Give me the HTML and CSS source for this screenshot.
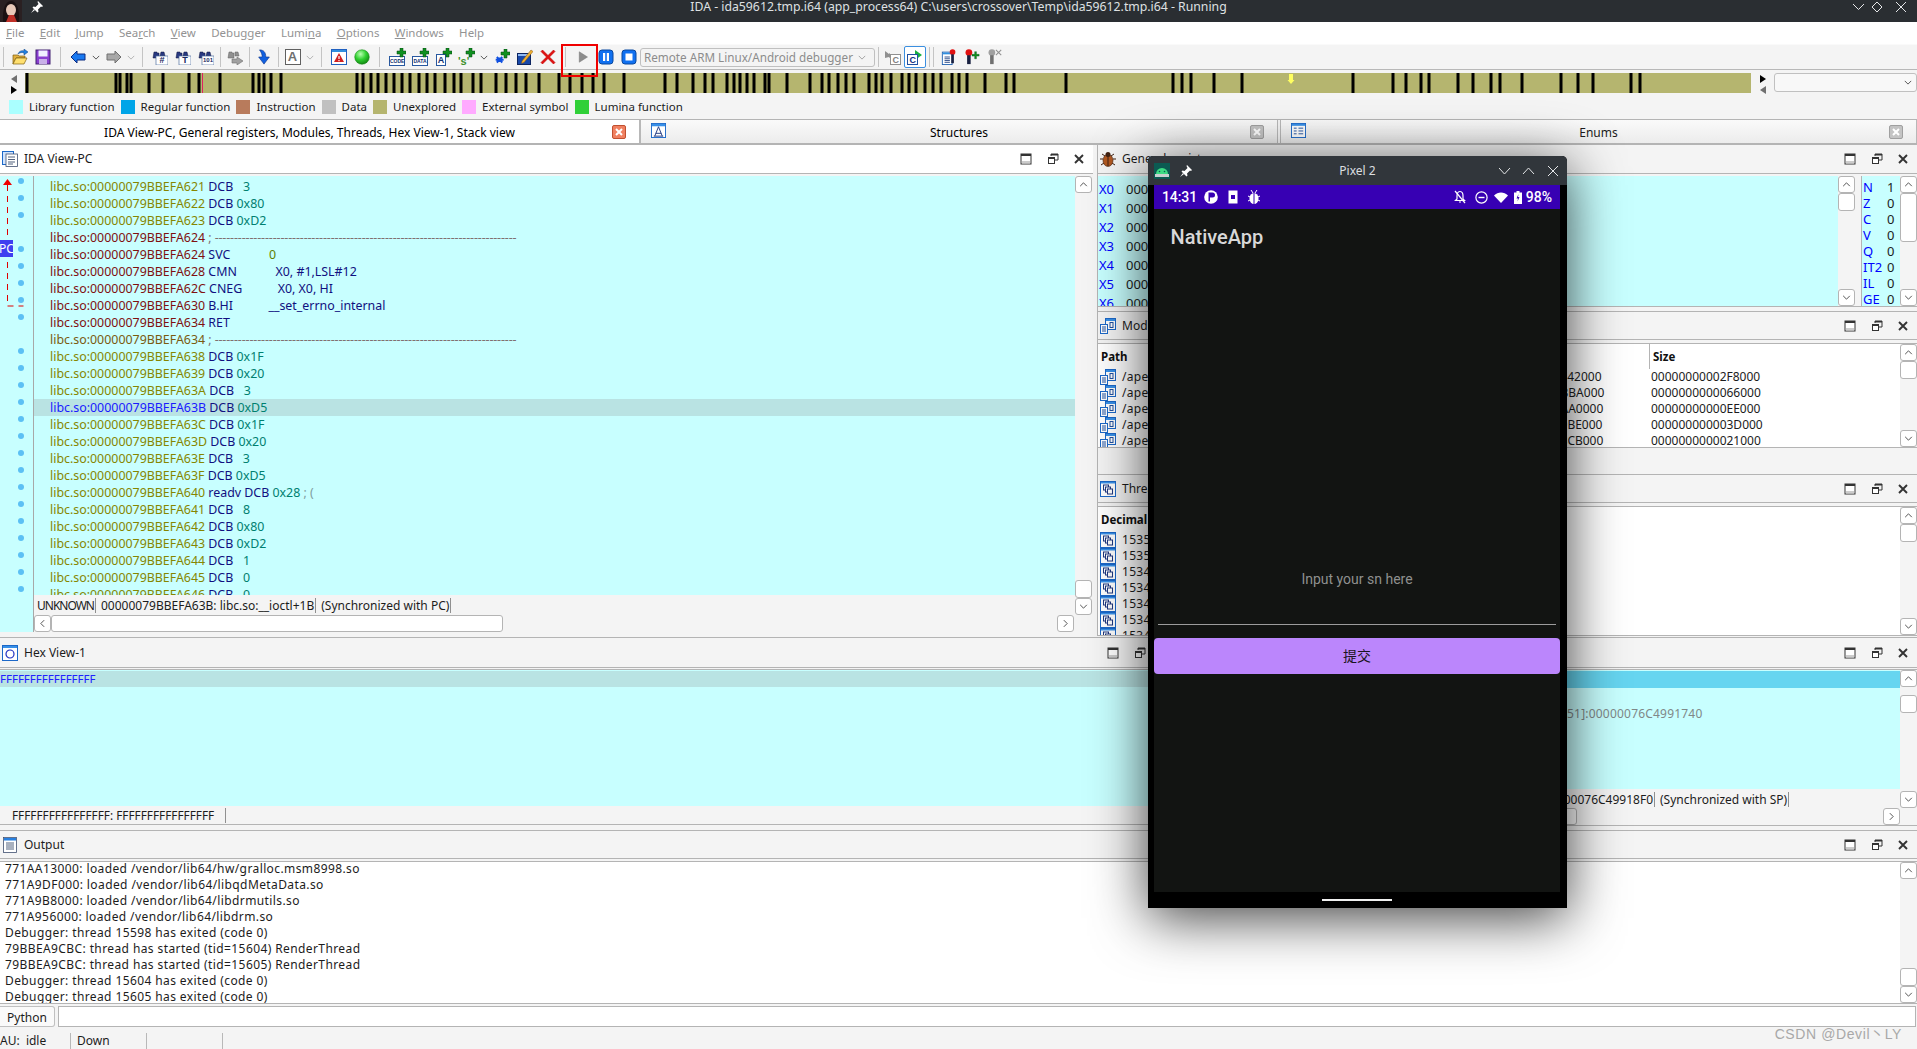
FILE: index.html
```html
<!DOCTYPE html>
<html lang="en">
<head>
  <meta charset="UTF-8" />
  <title>IDA - ida59612.tmp.i64</title>
  <link rel="stylesheet" href="styles.css">
</head>
<body>
  <!-- shared icons -->
  <svg class="sprite" xmlns="http://www.w3.org/2000/svg">
    <defs>
      <radialGradient id="ballFill" cx="40%" cy="30%" r="75%"><stop offset="0" stop-color="#b8ffb0"/><stop offset=".5" stop-color="#30d030"/><stop offset="1" stop-color="#108010"/></radialGradient>
      <symbol id="i-folder" viewBox="0 0 16 16"><path d="M1 15V6h5l1 1h6v2H4l-3 6z" fill="#e0b040" stroke="#806010" stroke-width=".7"/><path d="M1 15l3-6h11l-3 6z" fill="#ffe070" stroke="#806010" stroke-width=".7"/><path d="M6 5c1-3 4-4 6-3V0l4 3-4 3V4c-2-1-4-.5-6 1z" fill="#2080e0" stroke="#104080" stroke-width=".5"/></symbol>
      <symbol id="i-save" viewBox="0 0 16 16"><rect x="1" y="1" width="14" height="14" fill="#8a3fd0" stroke="#402070"/><rect x="3.500" y="1.500" width="9" height="6" fill="#f0f0ff"/><rect x="4" y="10" width="8" height="5" fill="#c8b0e8"/></symbol>
      <symbol id="i-back" viewBox="0 0 16 16"><path d="M1 8l6-6v3h8v6H7v3z" fill="#1878f0" stroke="#0a2a80"/></symbol>
      <symbol id="i-fwd" viewBox="0 0 16 16"><path d="M15 8L9 2v3H1v6h8v3z" fill="#a8a8a8" stroke="#707070"/></symbol>
      <symbol id="i-binoc" viewBox="0 0 16 16"><path d="M1 9l1-6h3v1h2v5z" fill="#283880" stroke="#101840" stroke-width=".5"/><path d="M9 3h3l1 4H8z" fill="#283880" stroke="#101840" stroke-width=".5"/><rect x="4" y="7" width="12" height="9" fill="#fff" stroke="#5070a0" stroke-width=".7"/></symbol>
      <symbol id="i-binarrow" viewBox="0 0 16 16"><path d="M1 9l1-6h3v1h2v5z" fill="#909090" stroke="#606060" stroke-width=".5"/><path d="M8 3h3l1 4H8z" fill="#909090" stroke="#606060" stroke-width=".5"/><path d="M5 10h5V8l6 4-6 4v-2H5z" fill="#a0a0a0" stroke="#707070" stroke-width=".6"/></symbol>
      <symbol id="i-down" viewBox="0 0 16 18"><path d="M3 1c5 0 7 3 7 8h4l-6 8-6-8h4c0-3-1-5-3-8z" fill="#1060e0" stroke="#08308a" stroke-width=".7"/></symbol>
      <symbol id="i-warn" viewBox="0 0 16 16"><rect x=".5" y=".5" width="15" height="15" fill="#fff" stroke="#2060c0"/><rect x="1" y="1" width="14" height="2" fill="#3090e0"/><path d="M8 4l5 9H3z" fill="#d02020"/><rect x="7.400" y="7" width="1.200" height="3" fill="#fff"/><rect x="7.400" y="11" width="1.200" height="1.200" fill="#fff"/></symbol>
      <symbol id="i-ball" viewBox="0 0 16 16"><circle cx="8" cy="8" r="7.300" fill="url(#ballFill)" stroke="#108010" stroke-width=".5"/></symbol>
      <symbol id="i-plus" viewBox="0 0 16 16"><path d="M10 0h3v3h3v3h-3v3h-3V6H7V3h3z" fill="#109020" stroke="#064010" stroke-width=".5"/></symbol>
      <symbol id="i-star" viewBox="0 0 16 16"><path d="M5.600 5v4M2 7h7.200M3 4.500l5 5M8 4.500l-5 5" transform="translate(-.5 3) scale(1.100)" stroke="#1050e0" stroke-width="1.800" fill="none"/><path d="M10 0h3v3h3v3h-3v3h-3V6H7V3h3z" fill="#109020" stroke="#064010" stroke-width=".5"/></symbol>
      <symbol id="i-pencil" viewBox="0 0 16 16"><rect x=".5" y="4.500" width="13" height="11" fill="#1848a8" stroke="#0c2460"/><rect x="1" y="5" width="12" height="2" fill="#90b8f0"/><path d="M5 12l9-11 2 1.500-9 11-2.500 1z" fill="#f0b030" stroke="#805010" stroke-width=".5"/></symbol>
      <symbol id="i-cross" viewBox="0 0 16 16"><path d="M1 2.500L2.500 1 8 6.500 13.500 1 15 2.500 9.500 8l5.500 5.500-1.500 1.500L8 9.500 2.500 15 1 13.500 6.500 8z" fill="#e01010" stroke="#c00000" stroke-width=".6"/></symbol>
      <symbol id="i-play" viewBox="0 0 16 16"><path d="M3 1l11 7-11 7z" fill="#8c8c8c" stroke="#707070" stroke-width=".6"/></symbol>
      <symbol id="i-pause" viewBox="0 0 16 16"><rect x="1" y="1" width="14" height="14" rx="3" fill="#1070f0" stroke="#0848a0"/><rect x="5" y="4" width="2.200" height="8" fill="#fff"/><rect x="8.800" y="4" width="2.200" height="8" fill="#fff"/></symbol>
      <symbol id="i-stop" viewBox="0 0 16 16"><rect x="1" y="1" width="14" height="14" rx="3" fill="#1070f0" stroke="#0848a0"/><rect x="4.500" y="4.500" width="7" height="7" fill="#fff"/></symbol>
      <symbol id="i-cgray" viewBox="0 0 16 16"><path d="M0 2l4 3V4l3 2.500L4 9V8L0 9z" fill="#909090"/><rect x="5.500" y="5.500" width="10" height="10" fill="#fff" stroke="#909090"/><text x="7.500" y="14" font-family="Liberation Sans" font-size="9" font-weight="700" fill="#808080">C</text></symbol>
      <symbol id="i-cgreen" viewBox="0 0 16 16"><path d="M8 1l7 5-7 5z" fill="#18b040"/><rect x=".5" y="5.500" width="10" height="10" fill="#fff" stroke="#2050a0"/><text x="2.500" y="14" font-family="Liberation Sans" font-size="9" font-weight="700" fill="#103080">C</text></symbol>
      <symbol id="i-bplist" viewBox="0 0 16 18"><rect x=".5" y="3.500" width="11" height="14" fill="#fff" stroke="#2060b0"/><rect x="1" y="4" width="10" height="2" fill="#3090e0"/><path d="M3 9h6M3 11h6M3 13h6M3 15h6" stroke="#204080"/><circle cx="12" cy="3.500" r="3.200" fill="#e01010"/><rect x="10.500" y="6" width="3" height="10" fill="#182040"/></symbol>
      <symbol id="i-bpplus" viewBox="0 0 16 18"><circle cx="4.500" cy="4" r="3.800" fill="#e01010"/><rect x="2.500" y="7" width="4" height="10" fill="#182040"/><path d="M11 3h2v3h3v2h-3v3h-2V8H8V6h3z" fill="#109020" stroke="#064010" stroke-width=".4"/></symbol>
      <symbol id="i-bpx" viewBox="0 0 16 18"><circle cx="4.500" cy="4" r="3.800" fill="#a0a0a0"/><rect x="2.500" y="7" width="4" height="10" fill="#707070"/><path d="M9 1l6 6M15 1L9 7" stroke="#909090" stroke-width="1.200"/></symbol>
      <symbol id="i-list" viewBox="0 0 16 16"><rect x=".5" y=".5" width="11" height="13" fill="#d0e4ff" stroke="#1c68c8"/><rect x="4" y="3" width="11.500" height="12.500" fill="#fff" stroke="#405070" stroke-width=".8"/><path d="M6 6h7M6 8.500h7M6 11h7M6 13h5" stroke="#405070" stroke-width=".9"/></symbol>
      <symbol id="i-hex" viewBox="0 0 16 16"><rect x=".5" y=".5" width="15" height="15" fill="#fff" stroke="#1c68c8"/><rect x="1" y="1" width="14" height="2" fill="#3890e8"/><circle cx="8" cy="9" r="4" fill="none" stroke="#2030c0" stroke-width="1.200"/></symbol>
      <symbol id="i-output" viewBox="0 0 16 16"><rect x="1.500" y=".5" width="13" height="15" fill="#fff" stroke="#405070" stroke-width=".8"/><rect x="2" y="1" width="12" height="2.500" fill="#2880e0"/><path d="M4 6h8M4 8h8M4 10h8M4 12h8" stroke="#405070" stroke-width=".9"/></symbol>
      <symbol id="i-bug" viewBox="0 0 16 16"><path d="M2 3l3 2M14 3l-3 2M0 8h3M16 8h-3M1 14l3-2M15 14l-3-2" stroke="#402010"/><ellipse cx="8" cy="9.500" rx="5" ry="6" fill="#b05820" stroke="#402010" stroke-width=".6"/><circle cx="8" cy="3.500" r="2.500" fill="#402010"/><path d="M8 4v11" stroke="#402010"/></symbol>
      <symbol id="i-module" viewBox="0 0 16 16"><rect x="5.500" y=".5" width="10" height="11" fill="#fff" stroke="#1c68c8"/><rect x="6" y="1" width="9" height="2" fill="#3890e8"/><rect x="10" y="4.500" width="3" height="5" fill="none" stroke="#2050a0"/><rect x=".5" y="6.500" width="7" height="9" fill="#fff" stroke="#1c68c8"/><path d="M2 9h4M2 11h4M2 13h4" stroke="#2050a0"/></symbol>
      <symbol id="i-thread" viewBox="0 0 16 16"><rect x=".5" y=".5" width="15" height="15" fill="#fff" stroke="#1c68c8"/><rect x="1" y="1" width="14" height="1.500" fill="#3890e8"/><rect x="3.500" y="4" width="5" height="5" fill="none" stroke="#203880"/><rect x="5.500" y="6" width="5" height="5" fill="#fff" stroke="#203880"/><rect x="7.500" y="8" width="5" height="5" fill="#fff" stroke="#203880"/></symbol>
      <symbol id="i-struct" viewBox="0 0 16 16"><rect x=".5" y=".5" width="15" height="15" fill="#fff" stroke="#1c68c8"/><rect x="1" y="1" width="14" height="2.500" fill="#3890e8"/><path d="M8 4L4 14M8 4l4 10M5 11h6M3 14h10" stroke="#203880" fill="none"/></symbol>
      <symbol id="i-enum" viewBox="0 0 16 16"><rect x=".5" y=".5" width="15" height="15" fill="#fff" stroke="#1c68c8"/><rect x="1" y="1" width="14" height="2" fill="#3890e8"/><path d="M3 5.500h3M3 8.500h3M3 11.500h3M8 5.500h5M8 8.500h5M8 11.500h5" stroke="#2050a0"/></symbol>
      <symbol id="i-pin" viewBox="0 0 12 12"><path d="M7 0l5 5-1 1-1-.5-3 3 .5 2-1 1-5-5 1-1 2 .5 3-3L6.500 1z" fill="#fff"/><path d="M3 8l-3 4 4-3z" fill="#fff"/></symbol>
      <symbol id="i-max" viewBox="0 0 12 12"><rect x="1" y="1" width="10" height="10" fill="#fff" stroke="#333"/><rect x="1" y="1" width="10" height="2" fill="#333"/><rect x="2" y="8" width="8" height="2.500" fill="#ccc"/></symbol>
      <symbol id="i-restore" viewBox="0 0 12 12"><path d="M4 3V1h7v6H8" fill="none" stroke="#333"/><rect x="4" y="1" width="7" height="1.500" fill="#333"/><rect x="1.500" y="4.500" width="6" height="6" fill="#fff" stroke="#333"/><rect x="1.500" y="4.500" width="6" height="1.500" fill="#333"/></symbol>
      <symbol id="i-close" viewBox="0 0 12 12"><path d="M2 2l8 8M10 2l-8 8" stroke="#333" stroke-width="1.900"/></symbol>
      <symbol id="i-up" viewBox="0 0 10 6"><path d="M1 5l4-4 4 4" fill="none" stroke="#333"/></symbol>
      <symbol id="i-dn" viewBox="0 0 10 6"><path d="M1 1l4 4 4-4" fill="none" stroke="#333"/></symbol>
      <symbol id="i-lf" viewBox="0 0 6 10"><path d="M5 1L1 5l4 4" fill="none" stroke="#333"/></symbol>
      <symbol id="i-rt" viewBox="0 0 6 10"><path d="M1 1l4 4-4 4" fill="none" stroke="#333"/></symbol>
      <symbol id="i-tabx" viewBox="0 0 14 14"><rect x=".5" y=".5" width="13" height="13" rx="1.500" fill="#f08060" stroke="#c05030"/><path d="M4 4l6 6M10 4l-6 6" stroke="#fff" stroke-width="2"/></symbol>
      <symbol id="i-tabx2" viewBox="0 0 14 14"><rect x=".5" y=".5" width="13" height="13" rx="1.500" fill="#c4c4c4" stroke="#a0a0a0"/><path d="M4 4l6 6M10 4l-6 6" stroke="#fff" stroke-width="2"/></symbol>
    </defs>
  </svg>

  <header class="titlebar">
    <svg class="avatar" viewBox="0 0 22 22"><rect width="22" height="22" fill="#2a2022"/><path d="M3 22C2 8 6 1 11 1s9 7 8 21z" fill="#1a1012"/><ellipse cx="11" cy="10" rx="5" ry="6" fill="#e8c8b8"/><path d="M6 22l3-7h5l3 7z" fill="#c03028"/></svg>
    <svg class="title-pin"><use href="#i-pin"/></svg>
    <span class="title-text">IDA - ida59612.tmp.i64 (app_process64) C:\users\crossover\Temp\ida59612.tmp.i64 - Running</span>
    <svg class="win-btns" viewBox="0 0 60 12"><path d="M0 3l5.500 5.500L11 3" fill="none" stroke="#e4e6e8"/><path d="M24 1l5 5-5 5-5-5z" fill="none" stroke="#e4e6e8"/><path d="M43 1l10 10M53 1L43 11" fill="none" stroke="#e4e6e8"/></svg>
  </header>

  <nav class="menubar">
    <span><u>F</u>ile</span>
    <span><u>E</u>dit</span>
    <span><u>J</u>ump</span>
    <span>Sea<u>r</u>ch</span>
    <span><u>V</u>iew</span>
    <span>Debu<u>g</u>ger</span>
    <span>Lumi<u>n</u>a</span>
    <span><u>O</u>ptions</span>
    <span><u>W</u>indows</span>
    <span>Help</span>
  </nav>

  <div class="toolbar">
    <i class="sep sep-first"></i>
    <span class="tool"><svg><use href="#i-folder"/></svg></span>
    <span class="tool"><svg><use href="#i-save"/></svg></span>
    <i class="sep"></i>
    <span class="tool"><svg><use href="#i-back"/></svg></span>
    <span class="dd on"><svg><use href="#i-dn"/></svg></span>
    <span class="tool"><svg><use href="#i-fwd"/></svg></span>
    <span class="dd off"><svg><use href="#i-dn"/></svg></span>
    <i class="sep"></i>
    <span class="tool bin"><svg><use href="#i-binoc"/></svg><b>#</b></span>
    <span class="tool bin"><svg><use href="#i-binoc"/></svg><b>T</b></span>
    <span class="tool bin"><svg><use href="#i-binoc"/></svg><b class="tiny">101</b></span>
    <i class="sep tight"></i>
    <span class="tool"><svg><use href="#i-binarrow"/></svg></span>
    <i class="sep tight"></i>
    <span class="tool"><svg><use href="#i-down"/></svg></span>
    <i class="sep tight"></i>
    <span class="tool"><span class="a-box">A</span></span>
    <span class="dd off"><svg><use href="#i-dn"/></svg></span>
    <i class="sep"></i>
    <span class="tool"><svg><use href="#i-warn"/></svg></span>
    <span class="tool"><svg><use href="#i-ball"/></svg></span>
    <i class="sep"></i>
    <span class="tool add"><b class="box">CODE</b><svg><use href="#i-plus"/></svg></span>
    <span class="tool add"><b class="box">DATA</b><svg><use href="#i-plus"/></svg></span>
    <span class="tool add"><b class="box big">A</b><svg><use href="#i-plus"/></svg></span>
    <span class="tool add"><b class="str">'s'</b><svg><use href="#i-plus"/></svg></span>
    <span class="dd on"><svg><use href="#i-dn"/></svg></span>
    <span class="tool"><svg><use href="#i-star"/></svg></span>
    <span class="tool"><svg><use href="#i-pencil"/></svg></span>
    <span class="tool"><svg><use href="#i-cross"/></svg></span>
    <i class="sep"></i>
    <span class="tool marked"><svg class="play"><use href="#i-play"/></svg></span>
    <span class="tool"><svg><use href="#i-pause"/></svg></span>
    <span class="tool"><svg><use href="#i-stop"/></svg></span>
    <div class="debugger-select"><span>Remote ARM Linux/Android debugger</span><svg><use href="#i-dn"/></svg></div>
    <i class="sep tight"></i>
    <span class="tool"><svg><use href="#i-cgray"/></svg></span>
    <span class="tool pressed"><svg><use href="#i-cgreen"/></svg></span>
    <i class="sep tight"></i>
    <i class="sep close"></i>
    <span class="tool"><svg><use href="#i-bplist"/></svg></span>
    <span class="tool"><svg><use href="#i-bpplus"/></svg></span>
    <span class="tool"><svg><use href="#i-bpx"/></svg></span>
  </div>

  <div class="navrow">
    <div class="nav-arrows"><i class="tri-l gray"></i><i class="tri-r"></i></div>
    <svg class="navband" viewBox="0 0 1726 20" preserveAspectRatio="none">
      <rect width="1726" height="20" fill="#b5b56f"/>
      <path stroke="#000" stroke-width="3" d="M2 0v20M91 0v20M95 0v20M102 0v20M106 0v20M124 0v20M138 0v20M164 0v20M174 0v20M195 0v20M228 0v20M234 0v20M239 0v20M246 0v20M256 0v20M332 0v20M338 0v20M346 0v20M353 0v20M361 0v20M369 0v20M377 0v20M385 0v20M394 0v20M402 0v20M410 0v20M420 0v20M429 0v20M436 0v20M448 0v20M456 0v20M471 0v20M481 0v20M491 0v20M501 0v20M514 0v20M534 0v20M545 0v20M557 0v20M568 0v20M579 0v20M599 0v20M640 0v20M652 0v20M668 0v20M680 0v20M688 0v20M702 0v20M709 0v20M715 0v20M722 0v20M729 0v20M740 0v20M744 0v20M762 0v20M785 0v20M797 0v20M804 0v20M813 0v20M821 0v20M829 0v20M844 0v20M851 0v20M857 0v20M866 0v20M877 0v20M884 0v20M891 0v20M900 0v20M908 0v20M916 0v20M927 0v20M934 0v20M942 0v20M960 0v20M981 0v20M989 0v20M1041 0v20M1148 0v20M1157 0v20M1166 0v20M1189 0v20M1217 0v20M1328 0v20M1368 0v20M1381 0v20M1396 0v20M1404 0v20M1433 0v20M1448 0v20M1466 0v20M1475 0v20M1497 0v20M1536 0v20M1553 0v20M1568 0v20M1606 0v20M1615 0v20"/>
      <path stroke="#e02060" d="M177.500 0v20"/>
      <path fill="#ffff60" d="M1264 1h4v6h1.500l-3.500 4-3.500-4h1.500z"/>
    </svg>
    <div class="nav-arrows right"><i class="tri-r"></i><i class="tri-l gray"></i></div>
    <div class="nav-select"><svg><use href="#i-dn"/></svg></div>
  </div>

  <div class="legend">
    <span class="lg lg-lib">Library function</span>
    <span class="lg lg-reg">Regular function</span>
    <span class="lg lg-ins">Instruction</span>
    <span class="lg lg-dat">Data</span>
    <span class="lg lg-une">Unexplored</span>
    <span class="lg lg-ext">External symbol</span>
    <span class="lg lg-lum">Lumina function</span>
  </div>

  <div class="tabs">
    <div class="tab tab-active">
      <span class="tab-name">IDA View-PC, General registers, Modules, Threads, Hex View-1, Stack view</span>
      <svg class="tab-x"><use href="#i-tabx"/></svg>
    </div>
    <div class="tab tab-struct">
      <svg class="tab-ic"><use href="#i-struct"/></svg>
      <span class="tab-name">Structures</span>
      <svg class="tab-x"><use href="#i-tabx2"/></svg>
    </div>
    <div class="tab tab-enum">
      <svg class="tab-ic"><use href="#i-enum"/></svg>
      <span class="tab-name">Enums</span>
      <svg class="tab-x"><use href="#i-tabx2"/></svg>
    </div>
  </div>

  <main class="workspace">
    <section class="upper">
      <!-- disassembly -->
      <div class="panel ida">
        <div class="ptitle active">
          <svg class="pic"><use href="#i-list"/></svg><span>IDA View-PC</span>
          <div class="ctl"><svg><use href="#i-max"/></svg><svg><use href="#i-restore"/></svg><svg><use href="#i-close"/></svg></div>
        </div>
        <div class="ida-body">
          <div class="gutter">
            <i class="d"></i><i class="d"></i><i class="d"></i><i></i><i class="d"></i><i class="d"></i><i class="d"></i><i class="d"></i><i class="d"></i><i></i><i class="d"></i><i class="d"></i><i class="d"></i><i class="d"></i><i class="d"></i><i class="d"></i><i class="d"></i><i class="d"></i><i class="d"></i><i class="d"></i><i class="d"></i><i class="d"></i><i class="d"></i><i class="d"></i><i class="d"></i>
            <svg class="jump" viewBox="0 0 24 170"><path d="M7.500 3L3 9h9z" fill="#f00000"/><path d="M7.500 9v121h16" fill="none" stroke="#e00000" stroke-dasharray="6 5"/></svg>
            <span class="pc-mark">PC</span>
          </div>
          <div class="ida-main">
            <div class="ida-left">
              <div class="code">
                <div class="ln"><span class="ad">libc.so:00000079BBEFA621</span> <span class="mn">DCB</span>   <span class="nm">3</span></div>
                <div class="ln"><span class="ad">libc.so:00000079BBEFA622</span> <span class="mn">DCB</span> <span class="nm">0x80</span></div>
                <div class="ln"><span class="ad">libc.so:00000079BBEFA623</span> <span class="mn">DCB</span> <span class="nm">0xD2</span></div>
                <div class="ln"><span class="ad cd">libc.so:00000079BBEFA624</span> <span class="cm">; ------------------------------------------------------------------------------</span></div>
                <div class="ln"><span class="ad cd">libc.so:00000079BBEFA624</span> <span class="mn">SVC</span>            <span class="zero">0</span></div>
                <div class="ln"><span class="ad cd">libc.so:00000079BBEFA628</span> <span class="mn">CMN</span>            <span class="mn">X0, #1,LSL#12</span></div>
                <div class="ln"><span class="ad cd">libc.so:00000079BBEFA62C</span> <span class="mn">CNEG</span>           <span class="mn">X0, X0, HI</span></div>
                <div class="ln"><span class="ad cd">libc.so:00000079BBEFA630</span> <span class="mn">B.HI</span>           <span class="mn">__set_errno_internal</span></div>
                <div class="ln"><span class="ad cd">libc.so:00000079BBEFA634</span> <span class="mn">RET</span></div>
                <div class="ln"><span class="ad cd2">libc.so:00000079BBEFA634</span> <span class="cm">; ------------------------------------------------------------------------------</span></div>
                <div class="ln"><span class="ad">libc.so:00000079BBEFA638</span> <span class="mn">DCB</span> <span class="nm">0x1F</span></div>
                <div class="ln"><span class="ad">libc.so:00000079BBEFA639</span> <span class="mn">DCB</span> <span class="nm">0x20</span></div>
                <div class="ln"><span class="ad">libc.so:00000079BBEFA63A</span> <span class="mn">DCB</span>   <span class="nm">3</span></div>
                <div class="ln sel"><span class="ad">libc.so:00000079BBEFA63B</span> <span class="mn">DCB</span> <span class="nm">0xD5</span></div>
                <div class="ln"><span class="ad">libc.so:00000079BBEFA63C</span> <span class="mn">DCB</span> <span class="nm">0x1F</span></div>
                <div class="ln"><span class="ad">libc.so:00000079BBEFA63D</span> <span class="mn">DCB</span> <span class="nm">0x20</span></div>
                <div class="ln"><span class="ad">libc.so:00000079BBEFA63E</span> <span class="mn">DCB</span>   <span class="nm">3</span></div>
                <div class="ln"><span class="ad">libc.so:00000079BBEFA63F</span> <span class="mn">DCB</span> <span class="nm">0xD5</span></div>
                <div class="ln"><span class="ad">libc.so:00000079BBEFA640</span> <span class="mn">readv DCB</span> <span class="nm">0x28</span> <span class="gr">; (</span></div>
                <div class="ln"><span class="ad">libc.so:00000079BBEFA641</span> <span class="mn">DCB</span>   <span class="nm">8</span></div>
                <div class="ln"><span class="ad">libc.so:00000079BBEFA642</span> <span class="mn">DCB</span> <span class="nm">0x80</span></div>
                <div class="ln"><span class="ad">libc.so:00000079BBEFA643</span> <span class="mn">DCB</span> <span class="nm">0xD2</span></div>
                <div class="ln"><span class="ad">libc.so:00000079BBEFA644</span> <span class="mn">DCB</span>   <span class="nm">1</span></div>
                <div class="ln"><span class="ad">libc.so:00000079BBEFA645</span> <span class="mn">DCB</span>   <span class="nm">0</span></div>
                <div class="ln"><span class="ad">libc.so:00000079BBEFA646</span> <span class="mn">DCB</span>   <span class="nm">0</span></div>
              </div>
              <div class="ida-status"><span class="cell cell-kind">UNKNOWN</span><span class="cell">00000079BBEFA63B: libc.so:__ioctl+1B</span><span class="cell">(Synchronized with PC)</span></div>
            </div>
            <div class="sb">
              <span class="sbb"><svg><use href="#i-up"/></svg></span>
              <span class="grow"></span>
              <span class="thumb t18"></span>
              <span class="sbb"><svg><use href="#i-dn"/></svg></span>
            </div>
            <div class="hs">
              <span class="sbb"><svg class="v"><use href="#i-lf"/></svg></span>
              <span class="hthumb"></span>
              <span class="grow"></span>
              <span class="sbb"><svg class="v"><use href="#i-rt"/></svg></span>
            </div>
          </div>
        </div>
      </div>

      <div class="rightcol">
        <!-- registers -->
        <div class="panel regs">
          <div class="ptitle">
            <svg class="pic"><use href="#i-bug"/></svg><span>General registers</span>
            <div class="ctl"><svg><use href="#i-max"/></svg><svg><use href="#i-restore"/></svg><svg><use href="#i-close"/></svg></div>
          </div>
          <div class="regs-body">
            <div class="reg-list">
              <div class="reg"><b>X0</b><span>0000000000000000</span></div>
              <div class="reg"><b>X1</b><span>0000000000000000</span></div>
              <div class="reg"><b>X2</b><span>0000000000000000</span></div>
              <div class="reg"><b>X3</b><span>0000000000000000</span></div>
              <div class="reg"><b>X4</b><span>0000000000000000</span></div>
              <div class="reg"><b>X5</b><span>0000000000000000</span></div>
              <div class="reg"><b>X6</b><span>0000000000000000</span></div>
            </div>
            <div class="sb">
              <span class="sbb"><svg><use href="#i-up"/></svg></span>
              <span class="thumb t18"></span>
              <span class="grow"></span>
              <span class="sbb"><svg><use href="#i-dn"/></svg></span>
            </div>
            <div class="flags">
              <div class="flag"><b>N</b><span>1</span></div>
              <div class="flag"><b>Z</b><span>0</span></div>
              <div class="flag"><b>C</b><span>0</span></div>
              <div class="flag"><b>V</b><span>0</span></div>
              <div class="flag"><b>Q</b><span>0</span></div>
              <div class="flag"><b>IT2</b><span>0</span></div>
              <div class="flag"><b>IL</b><span>0</span></div>
              <div class="flag"><b>GE</b><span>0</span></div>
            </div>
            <div class="sb">
              <span class="sbb"><svg><use href="#i-up"/></svg></span>
              <span class="thumb t48"></span>
              <span class="grow"></span>
              <span class="sbb"><svg><use href="#i-dn"/></svg></span>
            </div>
          </div>
        </div>

        <!-- modules -->
        <div class="panel mods">
          <div class="ptitle">
            <svg class="pic"><use href="#i-module"/></svg><span>Modules</span>
            <div class="ctl"><svg><use href="#i-max"/></svg><svg><use href="#i-restore"/></svg><svg><use href="#i-close"/></svg></div>
          </div>
          <div class="tbl-wrap">
            <div class="tbl">
              <div class="th"><span class="c1">Path</span><span class="c2">Size</span></div>
              <div class="tr"><span class="c1"><svg class="pic"><use href="#i-module"/></svg><span class="path">/apex/com.android.runtime/lib64/bionic/libc.so</span><span class="base">00000079BBE42000</span></span><span class="c2">00000000002F8000</span></div>
              <div class="tr"><span class="c1"><svg class="pic"><use href="#i-module"/></svg><span class="path">/apex/com.android.runtime/lib64/bionic/libm.so</span><span class="base">00000079BBBBA000</span></span><span class="c2">0000000000066000</span></div>
              <div class="tr"><span class="c1"><svg class="pic"><use href="#i-module"/></svg><span class="path">/apex/com.android.runtime/lib64/libc++.so</span><span class="base">00000079BBAA0000</span></span><span class="c2">00000000000EE000</span></div>
              <div class="tr"><span class="c1"><svg class="pic"><use href="#i-module"/></svg><span class="path">/apex/com.android.runtime/lib64/libdl.so</span><span class="base">00000079BB9BE000</span></span><span class="c2">000000000003D000</span></div>
              <div class="tr"><span class="c1"><svg class="pic"><use href="#i-module"/></svg><span class="path">/apex/com.android.runtime/lib64/liblog.so</span><span class="base">00000079BB8CB000</span></span><span class="c2">0000000000021000</span></div>
            </div>
            <div class="sb">
              <span class="sbb"><svg><use href="#i-up"/></svg></span>
              <span class="thumb t18"></span>
              <span class="grow"></span>
              <span class="sbb"><svg><use href="#i-dn"/></svg></span>
            </div>
          </div>
        </div>

        <!-- threads -->
        <div class="panel threads">
          <div class="ptitle">
            <svg class="pic"><use href="#i-thread"/></svg><span>Threads</span>
            <div class="ctl"><svg><use href="#i-max"/></svg><svg><use href="#i-restore"/></svg><svg><use href="#i-close"/></svg></div>
          </div>
          <div class="tbl-wrap grow">
            <div class="tbl">
              <div class="th"><span class="c1">Decimal</span></div>
              <div class="tr"><svg class="pic"><use href="#i-thread"/></svg><span class="path">15359</span></div>
              <div class="tr"><svg class="pic"><use href="#i-thread"/></svg><span class="path">15353</span></div>
              <div class="tr"><svg class="pic"><use href="#i-thread"/></svg><span class="path">15349</span></div>
              <div class="tr"><svg class="pic"><use href="#i-thread"/></svg><span class="path">15348</span></div>
              <div class="tr"><svg class="pic"><use href="#i-thread"/></svg><span class="path">15347</span></div>
              <div class="tr"><svg class="pic"><use href="#i-thread"/></svg><span class="path">15346</span></div>
              <div class="tr"><svg class="pic"><use href="#i-thread"/></svg><span class="path">15345</span></div>
            </div>
            <div class="sb">
              <span class="sbb"><svg><use href="#i-up"/></svg></span>
              <span class="thumb t18"></span>
              <span class="grow"></span>
              <span class="sbb"><svg><use href="#i-dn"/></svg></span>
            </div>
          </div>
        </div>
      </div>
    </section>

    <section class="lower">
      <!-- hex view -->
      <div class="panel hex">
        <div class="ptitle">
          <svg class="pic"><use href="#i-hex"/></svg><span>Hex View-1</span>
          <div class="ctl"><svg><use href="#i-max"/></svg><svg><use href="#i-restore"/></svg><svg><use href="#i-close"/></svg></div>
        </div>
        <div class="hex-body">
          <div class="hex-sel">FFFFFFFFFFFFFFFF</div>
        </div>
        <div class="hex-status"><span class="cell">FFFFFFFFFFFFFFFF: FFFFFFFFFFFFFFFF</span></div>
      </div>

      <!-- stack view -->
      <div class="panel stack">
        <div class="ptitle">
          <svg class="pic"><use href="#i-list"/></svg><span>Stack view</span>
          <div class="ctl"><svg><use href="#i-max"/></svg><svg><use href="#i-restore"/></svg><svg><use href="#i-close"/></svg></div>
        </div>
        <div class="stack-body">
          <div class="stack-left">
            <div class="stack-view">
              <div class="stack-sel"></div>
              <div class="stack-line">[anon:libc_malloc:0000007652C51]:00000076C4991740</div>
            </div>
            <div class="stack-status"><span class="cell">UNKNOWN 00000076C49918F0</span><span class="cell">(Synchronized with SP)</span></div>
            <div class="hs">
              <span class="sbb"><svg class="v"><use href="#i-lf"/></svg></span>
              <span class="hthumb stack-thumb"></span>
              <span class="grow"></span>
              <span class="sbb"><svg class="v"><use href="#i-rt"/></svg></span>
            </div>
          </div>
          <div class="sb sb-short">
            <span class="sbb"><svg><use href="#i-up"/></svg></span>
            <span class="thumb t18 t-gap"></span>
            <span class="grow"></span>
            <span class="sbb"><svg><use href="#i-dn"/></svg></span>
          </div>
        </div>
      </div>
    </section>

    <!-- output -->
    <section class="panel output">
      <div class="ptitle">
        <svg class="pic"><use href="#i-output"/></svg><span>Output</span>
        <div class="ctl"><svg><use href="#i-max"/></svg><svg><use href="#i-restore"/></svg><svg><use href="#i-close"/></svg></div>
      </div>
      <div class="out-body">
        <div class="out-log">
          <div>771AA13000: loaded /vendor/lib64/hw/gralloc.msm8998.so</div>
          <div>771A9DF000: loaded /vendor/lib64/libqdMetaData.so</div>
          <div>771A9B8000: loaded /vendor/lib64/libdrmutils.so</div>
          <div>771A956000: loaded /vendor/lib64/libdrm.so</div>
          <div>Debugger: thread 15598 has exited (code 0)</div>
          <div>79BBEA9CBC: thread has started (tid=15604) RenderThread</div>
          <div>79BBEA9CBC: thread has started (tid=15605) RenderThread</div>
          <div>Debugger: thread 15604 has exited (code 0)</div>
          <div>Debugger: thread 15605 has exited (code 0)</div>
        </div>
        <div class="sb">
          <span class="sbb"><svg><use href="#i-up"/></svg></span>
          <span class="grow"></span>
          <span class="thumb t18"></span>
          <span class="sbb"><svg><use href="#i-dn"/></svg></span>
        </div>
      </div>
    </section>
  </main>

  <div class="cli">
    <span class="cli-btn">Python</span>
    <div class="cli-input"></div>
  </div>

  <footer class="statusbar">
    <span class="st st-au">AU:  idle</span>
    <span class="st st-down">Down</span>
    <span class="st st-gap"></span>
  </footer>

  <!-- emulator window -->
  <div class="phone">
    <div class="phone-title">
      <svg class="droid" viewBox="0 0 16 16"><rect width="16" height="16" fill="#0b5a52"/><path d="M2 11a6 6 0 0 1 12 0z" fill="#3ddc84"/><circle cx="5.500" cy="8.500" r=".8" fill="#0b5a52"/><circle cx="10.500" cy="8.500" r=".8" fill="#0b5a52"/><rect x="1" y="11" width="14" height="3" fill="#c8d0d0"/></svg>
      <svg class="phone-pin"><use href="#i-pin"/></svg>
      <span class="phone-name">Pixel 2</span>
      <svg class="phone-btns" viewBox="0 0 60 12"><path d="M0 3l5.500 6L11 3M24 9l5.500-6L35 9M49 1l10 10M59 1L49 11" fill="none" stroke="#e4e6e8"/></svg>
    </div>
    <div class="screen">
      <div class="android-bar">
        <span class="clock">14:31</span>
        <svg class="si" viewBox="0 0 14 14"><circle cx="7" cy="7" r="6.800" fill="#fff"/><path d="M6 2.500h2.500a2.500 2.500 0 0 1 0 5H6z" fill="#3700b3"/><rect x="4.500" y="2.500" width="1.500" height="9" fill="#3700b3"/></svg>
        <svg class="si si-card" viewBox="0 0 10 14"><rect x=".5" y=".5" width="9" height="13" fill="#fff"/><rect x="3" y="5" width="4" height="4" fill="#3700b3"/></svg>
        <svg class="si si-bug" viewBox="0 0 12 14"><ellipse cx="6" cy="8.500" rx="4.500" ry="5.500" fill="#fff"/><path d="M6 3v11" stroke="#3700b3"/><path d="M3 0l2 3M9 0L7 3M0 6l2 1M12 6l-2 1M0 11l2-1M12 11l-2-1" stroke="#fff"/></svg>
        <span class="grow"></span>
        <svg class="si si-bell" viewBox="0 0 12 14"><path d="M6 1.500C3.500 1.500 3 4 3 6v3l-1.500 1.500h9L9 9V6c0-2-.5-4.500-3-4.500zM5 12h2" fill="none" stroke="#fff" stroke-width="1.200"/><path d="M1 1l10 12" stroke="#fff" stroke-width="1.200"/></svg>
        <svg class="si si-dnd" viewBox="0 0 13 13"><circle cx="6.500" cy="6.500" r="5.600" fill="none" stroke="#fff" stroke-width="1.200"/><rect x="3.500" y="5.800" width="6" height="1.400" fill="#fff"/></svg>
        <svg class="si si-wifi" viewBox="0 0 14 11"><path d="M0 3.500C4-.5 10-.5 14 3.500L7 11z" fill="#fff"/></svg>
        <svg class="si si-batt" viewBox="0 0 8 13"><path d="M2.500 0h3v1.500H8V13H0V1.500h2.500z" fill="#fff"/><path d="M4.500 3L2.500 7.500H4L3.500 10.500l2-4.500H4z" fill="#3700b3"/></svg>
        <span class="batt-pct">98%</span>
      </div>
      <div class="app-title">NativeApp</div>
      <div class="sn-input"><span>Input your sn here</span></div>
      <div class="submit">提交</div>
      <div class="grow"></div>
    </div>
    <div class="nav-handle"><i></i></div>
  </div>

  <div class="watermark">CSDN @Devil丶LY</div>
</body>
</html>
```

FILE: styles.css
```css
* {
  box-sizing: border-box;
}

body {
  margin: 0;
  width: 1917px;
  height: 1049px;
  overflow: hidden;
  position: relative;
  display: flex;
  flex-direction: column;
  background: #f4f4f4;
  color: #1c1c1c;
  font-family: "Noto Sans", sans-serif;
  font-size: 12px;
  line-height: 16px;
}

.sprite {
  position: absolute;
  width: 0;
  height: 0;
}

.grow {
  flex: 1;
}

/* window title */
.titlebar {
  height: 22px;
  flex: none;
  position: relative;
  background: #2a2e32;
  display: flex;
}

.avatar {
  width: 22px;
  height: 22px;
}

.title-pin {
  width: 12px;
  height: 12px;
  margin: 1px 0 0 9px;
}

.title-text {
  position: absolute;
  left: 0;
  right: 0;
  top: -1px;
  text-align: center;
  color: #dfe1e3;
  font-size: 12.25px;
}

.win-btns {
  width: 60px;
  height: 12px;
  margin: 1px 4px 0 auto;
}

/* menu */
.menubar {
  height: 22px;
  flex: none;
  background: #fff;
  display: flex;
  align-items: center;
  gap: 15.3px;
  padding-left: 6px;
  color: #939393;
  font-size: 11.5px;
}

/* toolbar */
.toolbar {
  height: 26px;
  flex: none;
  display: flex;
  align-items: center;
  padding-left: 3px;
  border-bottom: 1px solid #b8b8b8;
  border-top: 1px solid #fafafa;
}

.sep {
  width: 1px;
  height: 20px;
  flex: none;
  margin: 0 5px 0 6px;
  background: #c4c4c4;
}

.sep-first {
  margin-left: 0;
  margin-right: 4px;
}

.sep.tight {
  margin: 0 2.5px;
}

.sep.close {
  margin: 0 3px 0 1px;
}

.tool {
  width: 23px;
  height: 24px;
  flex: none;
  position: relative;
  display: flex;
  align-items: center;
  justify-content: center;
}

.tool svg {
  width: 16px;
  height: 16px;
}

.tool.marked::after {
  content: "";
  position: absolute;
  left: -10px;
  top: -1px;
  width: 33px;
  height: 29px;
  border: 2px solid #f00000;
}

.tool .play {
  width: 12px;
  height: 14px;
}

.tool.pressed {
  width: 22px;
  height: 22px;
  border: 1px solid #3b8fe0;
  border-radius: 2px;
  background: #fff;
}

.bin b {
  position: absolute;
  left: 8px;
  top: 10px;
  width: 12px;
  text-align: center;
  font-size: 9px;
  line-height: 10px;
  color: #182860;
  font-family: "Liberation Sans", sans-serif;
}

.bin b.tiny {
  font-size: 6px;
}

.a-box {
  width: 16px;
  height: 16px;
  border: 1px solid #606060;
  background: #fff;
  color: #707070;
  font: 700 13px/14px "Liberation Sans", sans-serif;
  text-align: center;
}

.dd {
  width: 11px;
  flex: none;
  display: flex;
  justify-content: center;
}

.dd.on {
  margin: 0 1px;
}

.dd svg {
  width: 8px;
  height: 5px;
}

.dd.off {
  opacity: 0.4;
}

.add .box {
  position: absolute;
  left: 4px;
  bottom: 3px;
  width: 16px;
  height: 10px;
  border: 1px solid #2858a0;
  background: #fff;
  color: #103070;
  font: 700 5px/8px "Liberation Sans", sans-serif;
  text-align: center;
}

.add .box.big {
  width: 10px;
  height: 12px;
  font-size: 9px;
  left: 5px;
  line-height: 10px;
}

.add .str {
  position: absolute;
  left: 4px;
  bottom: 2px;
  color: #40902a;
  font: 700 11px/12px "Liberation Sans", sans-serif;
}

.add svg {
  position: absolute;
  left: 5px;
  top: 3px;
}

.debugger-select {
  width: 235px;
  height: 19px;
  flex: none;
  display: flex;
  align-items: center;
  justify-content: space-between;
  border: 1px solid #c0c0c0;
  border-radius: 3px;
  padding: 0 8px 0 3px;
  color: #8c8c8c;
  white-space: nowrap;
  font-size: 11.7px;
}

.debugger-select svg {
  width: 8px;
  height: 5px;
  opacity: 0.5;
}

/* navigation band */
.navrow {
  height: 25px;
  flex: none;
  display: flex;
  padding-top: 3px;
}

.nav-arrows {
  width: 25px;
  display: flex;
  flex-direction: column;
  align-items: center;
  gap: 3px;
  padding: 2px 0 0 2px;
}

.nav-arrows.right {
  width: 23px;
  padding-left: 0;
}

.tri-l,
.tri-r {
  width: 0;
  height: 0;
  border-top: 4px solid transparent;
  border-bottom: 4px solid transparent;
}

.tri-l {
  border-right: 6px solid #000;
}

.tri-r {
  border-left: 6px solid #000;
}

.tri-l.gray {
  border-right-color: #707070;
}

.navband {
  width: 1726px;
  height: 20px;
  flex: none;
}

.nav-select {
  width: 143px;
  height: 19px;
  border: 1px solid #c0c0c0;
  border-radius: 3px;
  background: #f8f8f8;
  display: flex;
  align-items: center;
  justify-content: flex-end;
  padding-right: 4px;
}

.nav-select svg {
  width: 8px;
  height: 5px;
}

/* legend */
.legend {
  height: 25px;
  flex: none;
  position: relative;
  display: flex;
  align-items: flex-start;
  padding: 4px 0 0 9px;
  gap: 6px;
  border-bottom: 1px solid #b4b4b4;
  font-size: 11.5px;
}

.lg {
  display: flex;
  align-items: center;
  gap: 6px;
  height: 16px;
}

.lg::before {
  content: "";
  width: 14px;
  height: 14px;
  background: var(--swatch);
}

.lg-lib { --swatch: #aaffff; }
.lg-reg { --swatch: #00a5e8; }
.lg-ins { --swatch: #b87b5c; }
.lg-dat { --swatch: #c0c0c0; }
.lg-une { --swatch: #b5b56f; }
.lg-ext { --swatch: #ffaaff; }
.lg-lum { --swatch: #30d038; }

/* tabs */
.tabs {
  height: 25px;
  flex: none;
  display: flex;
  border-bottom: 2px solid #b4b4b4;
}

.tab {
  position: relative;
  display: flex;
  align-items: center;
  justify-content: center;
  border-right: 1px solid #b8b8b8;
  background: linear-gradient(#fafafa, #ececec);
  font-size: 12px;
}

.tab-name {
  padding-top: 3px;
}

.tab-active {
  width: 640px;
  background: #fff;
  color: #000;
}

.tab-active .tab-name {
  margin-right: 20px;
  padding-top: 2px;
}

.tab-struct {
  width: 638px;
  border-left: 1px solid #b8b8b8;
  color: #000;
}

.tab-enum {
  flex: 1;
  margin-left: 2px;
  border-left: 1px solid #b8b8b8;
}

.tab-ic {
  position: absolute;
  left: 10px;
  top: 3px;
  width: 15px;
  height: 15px;
}

.tab-x {
  position: absolute;
  right: 13px;
  top: 5px;
  width: 14px;
  height: 14px;
}

/* workspace */
.workspace {
  flex: 1;
  min-height: 0;
  display: flex;
  flex-direction: column;
}

.upper {
  height: 491px;
  flex: none;
  display: flex;
  gap: 4px;
}

.panel {
  display: flex;
  flex-direction: column;
  min-width: 0;
}

.ptitle {
  height: 29px;
  flex: none;
  display: flex;
  align-items: center;
  border-bottom: 1px solid #b4b4b4;
  padding-left: 2px;
  gap: 6px;
}

.ptitle.active {
  background: #fff;
}

.pic {
  width: 16px;
  height: 16px;
  flex: none;
}

.ctl {
  margin-left: auto;
  display: flex;
  align-items: center;
  gap: 14px;
  padding-right: 8px;
}

.ctl svg {
  width: 12px;
  height: 12px;
}

.ctl svg:first-child {
  margin-right: 1px;
}

/* disassembly */
.ida {
  width: 1093px;
  flex: none;
  padding-bottom: 4px;
}

.ida-body {
  flex: 1;
  min-height: 0;
  margin-top: 2px;
  display: flex;
  background: #c8ffff;
}

.gutter {
  width: 29px;
  flex: none;
  position: relative;
  padding-top: 2px;
  display: flex;
  flex-direction: column;
}

.gutter i {
  height: 17px;
  flex: none;
  position: relative;
}

.gutter i.d::after {
  content: "";
  position: absolute;
  left: 18px;
  top: 0;
  width: 6px;
  height: 6px;
  border-radius: 50%;
  background: #5cc0f4;
}

.jump {
  position: absolute;
  left: 0;
  top: 0;
  width: 24px;
  height: 170px;
  overflow: visible;
}

.pc-mark {
  position: absolute;
  left: 0;
  top: 64px;
  width: 13px;
  height: 17px;
  background: #3f3ff0;
  color: #fff;
  font-size: 12px;
  line-height: 17px;
  overflow: hidden;
  text-indent: -1px;
}

.ida-main {
  flex: 1;
  min-width: 0;
  margin-left: 4px;
  border-left: 1px solid #a8a8a8;
  display: grid;
  grid-template-columns: 1fr 18px;
  grid-template-rows: 1fr 17px;
  background: #f4f4f4;
}

.ida-left {
  min-width: 0;
  min-height: 0;
  display: flex;
  flex-direction: column;
}

.code {
  flex: 1;
  min-height: 0;
  overflow: hidden;
  padding-top: 2px;
  background: #c8ffff;
}

.ln {
  height: 17px;
  padding-left: 16px;
  line-height: 17px;
  white-space: pre;
  font-size: 12.4px;
}

.ln.sel {
  background: #b9e3e3;
}

.ln.sel .ad {
  color: #1a1aff;
}

.ad { color: #868600; }
.ad.cd { color: #801010; }
.ad.cd2 { color: #7a5a10; }
.mn { color: #101080; }
.nm { color: #008070; }
.zero { color: #608000; }
.gr { color: #80a0a0; }
.cm { color: #807070; letter-spacing: -0.12px; }

.ida-status {
  height: 20px;
  flex: none;
  padding-left: 3px;
  display: flex;
  align-items: center;
  white-space: pre;
}

.cell {
  padding-right: 1px;
  border-right: 1px solid #909090;
  margin-right: 5px;
  line-height: 15px;
}

.cell-kind {
  letter-spacing: -1px;
}

/* scrollbars */
.sb {
  width: 17px;
  flex: none;
  display: flex;
  flex-direction: column;
  background: #f4f4f4;
}

.sb-short {
  padding-bottom: 17px;
}

.sbb {
  width: 17px;
  height: 17px;
  flex: none;
  display: flex;
  align-items: center;
  justify-content: center;
  border: 1px solid #b4b4b4;
  border-radius: 3px;
  background: #fff;
}

.sbb svg {
  width: 9px;
  height: 5px;
}

.sbb svg.v {
  width: 5px;
  height: 9px;
}

.thumb {
  width: 17px;
  flex: none;
  border: 1px solid #b4b4b4;
  border-radius: 3px;
  background: #fff;
}

.t18 { height: 18px; }
.t48 { height: 49px; }
.t-gap { margin-top: 8px; }

.hs {
  display: flex;
  height: 17px;
  flex: none;
  background: #f4f4f4;
}

.hthumb {
  width: 452px;
  border: 1px solid #b4b4b4;
  border-radius: 3px;
  background: #fff;
}

.ida-main .hs {
  padding-right: 1px;
}

/* right column */
.rightcol {
  flex: 1;
  min-width: 0;
  display: flex;
  flex-direction: column;
  border-left: 1px solid #b4b4b4;
}

.regs {
  height: 162px;
  flex: none;
}

.regs-body {
  flex: 1;
  min-height: 0;
  margin-top: 2px;
  display: flex;
  border-bottom: 1px solid #b4b4b4;
}

.reg-list {
  flex: 1;
  min-width: 0;
  overflow: hidden;
  background: #c8ffff;
  padding: 4px 0 0 1px;
}

.reg {
  height: 19px;
  display: flex;
  line-height: 19px;
  font-size: 13px;
}

.reg b {
  width: 27px;
  font-weight: 400;
  color: #0000ff;
}

.flags {
  width: 39px;
  flex: none;
  margin-left: 6px;
  border-left: 1px solid #b4b4b4;
  background: #c8ffff;
  padding: 3px 0 0 1px;
  overflow: hidden;
}

.flag {
  height: 16px;
  display: flex;
  font-size: 13px;
}

.flag b {
  width: 24px;
  font-weight: 400;
  color: #0000ff;
}

.mods {
  height: 137px;
  flex: none;
  margin-top: 4px;
}

.mods .ptitle,
.threads .ptitle {
  border-top: 1px solid #b4b4b4;
}

.tbl-wrap {
  flex: 1;
  min-height: 0;
  margin-top: 3px;
  display: flex;
  background: #fff;
  border-top: 1px solid #b4b4b4;
  border-bottom: 1px solid #b4b4b4;
}

.tbl {
  flex: 1;
  min-width: 0;
  overflow: hidden;
  padding-left: 2px;
}

.th {
  height: 25px;
  display: flex;
  align-items: center;
  font-weight: 700;
  font-size: 11.5px;
  color: #101010;
  padding-left: 1px;
}

.th .c1 {
  width: 548px;
  flex: none;
}

.th .c2 {
  height: 25px;
  line-height: 25px;
  border-left: 1px solid #b4b4b4;
  padding-left: 3px;
}

.tr {
  height: 16px;
  display: flex;
  align-items: center;
  white-space: nowrap;
}

.tr .c1 {
  width: 551px;
  flex: none;
  display: flex;
  align-items: center;
}

.path {
  margin-left: 6px;
  flex: 1;
  letter-spacing: 0.3px;
}

.base {
  width: 110px;
  margin-right: 51px;
  text-align: right;
}

.threads {
  flex: 1;
  min-height: 0;
  margin-top: 26px;
}

/* lower row */
.lower {
  height: 189px;
  flex: none;
  display: flex;
  gap: 4px;
  margin-top: 1px;
}

.hex {
  width: 1180px;
  flex: none;
}

.lower .ptitle {
  border-top: 1px solid #b4b4b4;
  height: 31px;
}

.hex-body {
  height: 137px;
  flex: none;
  margin-top: 1px;
  border-top: 1px solid #b4b4b4;
  background: #c8ffff;
  padding-top: 1px;
}

.hex-sel {
  height: 16px;
  line-height: 16px;
  background: #b9e3e3;
  color: #2020ff;
  font-size: 11.5px;
}

.hex-status {
  height: 19px;
  flex: none;
  padding: 1px 0 0 12px;
  border-bottom: 1px solid #b4b4b4;
  overflow: hidden;
  font-size: 11.8px;
}

.hex-status .cell {
  display: inline-block;
  margin-right: 0;
  padding-right: 11px;
}

.stack {
  flex: 1;
  min-width: 0;
}

.stack-body {
  flex: 1;
  min-height: 0;
  margin-top: 1px;
  display: flex;
  border-top: 1px solid #b4b4b4;
  border-bottom: 1px solid #b4b4b4;
}

.stack-left {
  flex: 1;
  min-width: 0;
  display: flex;
  flex-direction: column;
}

.stack-view {
  flex: 1;
  min-height: 0;
  background: #c8ffff;
  padding-top: 1px;
}

.stack-sel {
  height: 17px;
  background: #66d5f0;
}

.stack-line {
  margin-top: 18px;
  padding-left: 200px;
  color: #808888;
  white-space: nowrap;
  letter-spacing: 0.2px;
}

.stack-status {
  height: 19px;
  flex: none;
  display: flex;
  align-items: center;
  padding: 2px 0 0 292px;
  white-space: nowrap;
}

.stack-thumb {
  width: 376px;
}

.stack .hs {
  padding-right: 0;
}

.stack .grow {
  min-width: 0;
}

/* output */
.output {
  flex: 1;
  min-height: 0;
  margin-top: 4px;
}

.output .ptitle {
  border-top: 1px solid #b4b4b4;
  height: 29px;
}

.out-body {
  flex: 1;
  min-height: 0;
  margin-top: 2px;
  display: flex;
  background: #fff;
  border-top: 1px solid #b4b4b4;
  border-bottom: 1px solid #b4b4b4;
}

.out-log {
  flex: 1;
  margin-top: -1px;
  padding-left: 5px;
  white-space: nowrap;
  overflow: hidden;
  letter-spacing: 0.4px;
}

/* python bar */
.cli {
  height: 21px;
  flex: none;
  margin-top: 2px;
  display: flex;
  gap: 3px;
}

.cli-btn {
  width: 55px;
  border: 1px solid #c0c0c0;
  border-left: 0;
  border-radius: 0 3px 3px 0;
  background: #fafafa;
  text-align: center;
  line-height: 21px;
}

.cli-input {
  flex: 1;
  background: #fff;
  border: 1px solid #b4b4b4;
  margin-right: 1px;
}

/* status bar */
.statusbar {
  height: 22px;
  flex: none;
  display: flex;
  align-items: flex-start;
  padding-top: 6px;
  white-space: pre;
}

.st {
  height: 16px;
  line-height: 16px;
  border-right: 1px solid #b8b8b8;
}

.st-au { width: 71px; }
.st-down { width: 76px; padding-left: 6px; }
.st-gap { width: 76px; }

/* emulator */
.phone {
  position: absolute;
  left: 1148px;
  top: 156px;
  width: 419px;
  height: 752px;
  display: flex;
  flex-direction: column;
  background: #000;
  border-radius: 5px 5px 0 0;
  box-shadow: 0 10px 55px rgba(0, 0, 0, 0.75);
}

.phone-title {
  height: 29px;
  flex: none;
  position: relative;
  display: flex;
  align-items: center;
  background: #31363b;
  border-radius: 5px 5px 0 0;
  padding-left: 6px;
}

.droid {
  width: 16px;
  height: 16px;
}

.phone-pin {
  width: 12px;
  height: 12px;
  margin-left: 10px;
}

.phone-name {
  position: absolute;
  left: 0;
  right: 0;
  text-align: center;
  color: #dcdfe0;
}

.phone-btns {
  width: 60px;
  height: 12px;
  margin-left: auto;
  margin-right: 8px;
  position: relative;
}

.screen {
  flex: 1;
  min-height: 0;
  margin: 0 7px 0 6px;
  display: flex;
  flex-direction: column;
  background: #121412;
  font-family: Roboto, sans-serif;
}

.android-bar {
  height: 24px;
  flex: none;
  display: flex;
  align-items: center;
  background: #3700b3;
  padding: 0 8px;
  color: #fff;
  font-size: 14px;
  font-weight: 500;
}

.clock {
  width: 42px;
  letter-spacing: -0.1px;
}

.si {
  width: 14px;
  height: 14px;
  flex: none;
}

.si-card { width: 10px; margin-left: 10px; }
.si-bug { width: 12px; margin-left: 10px; }
.si-bell { width: 12px; margin-right: -1px; }
.si-dnd { width: 13px; height: 13px; margin-left: 10px; margin-right: -1px; }
.si-wifi { width: 14px; height: 11px; margin-left: 7px; }
.si-batt { width: 8px; height: 13px; margin-left: 6px; }

.batt-pct {
  margin-left: 4px;
}

.app-title {
  margin: 16px 0 0 16.500px;
  color: #d8d8d8;
  font-size: 20px;
  font-weight: 500;
  line-height: 24px;
}

.sn-input {
  height: 376px;
  flex: none;
  margin: 0 4px;
  padding-top: 320px;
  border-bottom: 1px solid #9c9c9c;
  text-align: center;
  color: #8f908f;
  font-size: 14px;
  line-height: 20px;
}

.submit {
  height: 36px;
  flex: none;
  margin-top: 13px;
  border-radius: 4px;
  background: #bb86fc;
  color: #1a1420;
  font-family: "Noto Sans CJK SC", sans-serif;
  font-size: 14px;
  line-height: 34px;
  text-align: center;
}

.nav-handle {
  height: 16px;
  flex: none;
  display: flex;
  align-items: center;
  justify-content: center;
  padding-right: 1px;
}

.nav-handle i {
  width: 70px;
  height: 2px;
  background: #f0f0f0;
}

.watermark {
  position: absolute;
  right: 15px;
  top: 1025px;
  color: #a8a8a8;
  font-family: "Liberation Sans", "Noto Sans CJK SC", sans-serif;
  font-size: 14px;
  line-height: 18px;
  letter-spacing: 0.6px;
}
```
